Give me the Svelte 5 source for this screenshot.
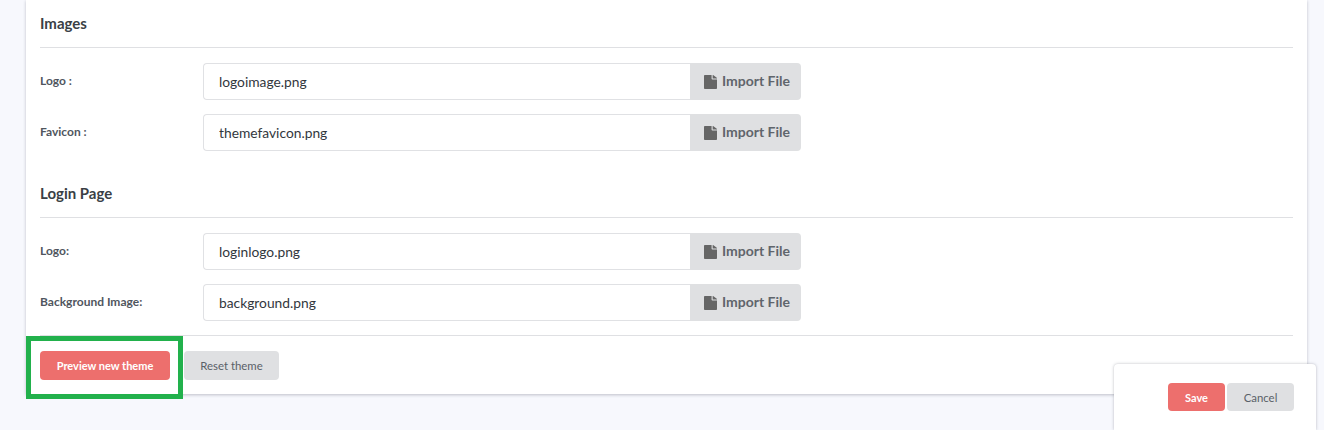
<script>
  const sections = [
    {
      title: 'Images',
      rows: [
        { label: 'Logo :', file: 'logoimage.png' },
        { label: 'Favicon :', file: 'themefavicon.png' }
      ]
    },
    {
      title: 'Login Page',
      rows: [
        { label: 'Logo:', file: 'loginlogo.png' },
        { label: 'Background Image:', file: 'background.png' }
      ]
    }
  ];
</script>

<div class="page">
  <div class="card">
    {#each sections as section}
      <section class="section">
        <h4>{section.title}</h4>
        {#each section.rows as row}
          <div class="row">
            <label for={row.file}>{row.label}</label>
            <div class="file-group">
              <input id={row.file} type="text" value={row.file} readonly />
              <button class="import" type="button">
                <svg viewBox="0 0 384 512" aria-hidden="true" preserveAspectRatio="none">
                  <path d="M224 136V0H24C10.700 0 0 10.700 0 24v464c0 13.300 10.700 24 24 24h336c13.300 0 24-10.700 24-24V160H248c-13.200 0-24-10.800-24-24zm160-14.100v6.100H256V0h6.100c6.400 0 12.500 2.500 17 7l97.900 98c4.500 4.500 7 10.600 7 16.900z"/>
                </svg>
                <span>Import File</span>
              </button>
            </div>
          </div>
        {/each}
      </section>
    {/each}
    <div class="actions">
      <button class="btn primary" type="button">Preview new theme</button>
      <button class="btn muted" type="button">Reset theme</button>
    </div>
  </div>

  <div class="highlight"></div>

  <div class="savebar">
    <button class="btn primary small" type="button">Save</button>
    <button class="btn muted small" type="button">Cancel</button>
  </div>
</div>

<style>
  :global(body) {
    background: #f7f8fd;
    font-family: Lato, "Liberation Sans", sans-serif;
    overflow: hidden;
  }

  .page {
    position: relative;
    height: 430px;
    padding: 0 17px 0 26px;
    box-sizing: border-box;
  }

  .card {
    background: #fff;
    padding: 0 14px 14px;
    height: 394px;
    box-sizing: border-box;
    box-shadow: 0 1px 3px rgba(60, 64, 80, 0.3);
  }

  .section:first-child {
    padding-top: 14px;
  }

  .section + .section {
    padding-top: 19px;
  }

  h4 {
    margin: 0 0 15px;
    height: 34px;
    line-height: 19px;
    font-size: 15px;
    font-weight: 700;
    color: #3a3f45;
    border-bottom: 1px solid #dfe0e3;
    box-sizing: border-box;
  }

  .row {
    display: flex;
    align-items: center;
    margin-bottom: 14px;
  }

  .row label {
    width: 163px;
    font-size: 12px;
    font-weight: 700;
    color: #50565e;
    position: relative;
    top: -1px;
  }

  .file-group {
    display: flex;
    width: 598px;
    height: 37px;
  }

  .file-group input {
    flex: 1;
    min-width: 0;
    padding: 0 15px;
    font: 400 13.8px Lato, "Liberation Sans", sans-serif;
    color: #32373d;
    background: #fff;
    border: 1px solid #e0e1e4;
    border-right: 0;
    border-radius: 4px 0 0 4px;
    outline: none;
  }

  .import {
    display: flex;
    align-items: center;
    gap: 5px;
    width: 111px;
    padding: 0 0 0 14px;
    font: 700 14px Lato, "Liberation Sans", sans-serif;
    color: #5f656c;
    background: #dfe0e2;
    border: 0;
    border-radius: 0 4px 4px 0;
  }

  .import span {
    margin-bottom: 2px;
  }

  .import svg {
    width: 13px;
    height: 14px;
    fill: #666;
  }

  .actions {
    border-top: 1px solid #dfe0e3;
    padding-top: 15px;
    display: flex;
    gap: 14px;
  }

  .btn {
    height: 29px;
    padding: 0;
    font: 400 11.4px Lato, "Liberation Sans", sans-serif;
    border: 0;
    border-radius: 4px;
  }

  .primary {
    width: 130px;
    color: #fff;
    font-weight: 700;
    font-size: 11px;
    background: #ed6f6d;
  }

  .muted {
    width: 95px;
    color: #5a6068;
    background: #dfe0e2;
  }

  .highlight {
    position: absolute;
    left: 26px;
    top: 336px;
    width: 157px;
    height: 63px;
    box-sizing: border-box;
    border: 5px solid #22b14c;
  }

  .savebar {
    position: absolute;
    left: 1114px;
    top: 364px;
    width: 202px;
    height: 66px;
    padding: 19px 22px 0 0;
    box-sizing: border-box;
    display: flex;
    justify-content: flex-end;
    align-items: flex-start;
    gap: 2px;
    background: #fff;
    border-radius: 4px 4px 0 0;
    box-shadow: 0 0 3px rgba(60, 64, 80, 0.35);
  }

  .small {
    height: 28px;
  }

  .small.primary {
    width: 57px;
  }

  .small.muted {
    width: 67px;
  }
</style>
